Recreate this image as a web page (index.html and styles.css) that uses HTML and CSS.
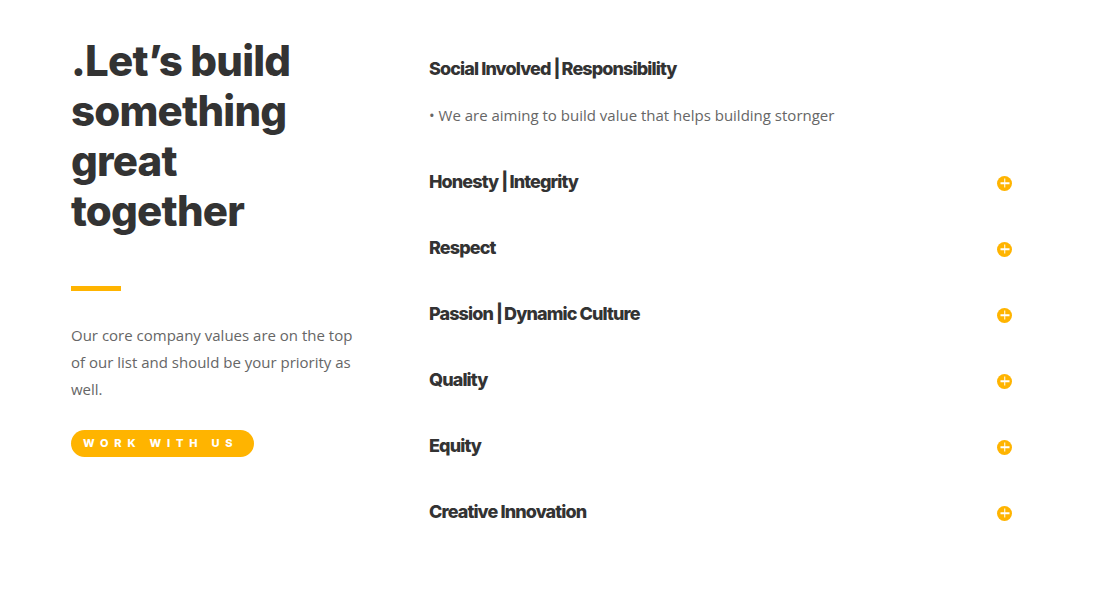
FILE: index.html
```html
<!DOCTYPE html>
<html lang="en">

<head>
	<meta charset="UTF-8">
	<meta name="viewport" content="width=device-width, initial-scale=1.0">
	<title>Our Values</title>
	<link rel="stylesheet" href="styles.css">
</head>

<body>
	<section class="values">
		<div class="intro">
			<h2 class="headline">.Let’s build something great together</h2>
			<span class="line"></span>
			<p class="lead">Our core company values are on the top of our list and should be your priority as well.</p>
			<a class="btn" href="#">Work with us</a>
		</div>

		<div class="accordion">
			<div class="tab on">
				<div class="title">Social Involved<span class="sep">|</span>Responsibility</div>
				<div class="desc">• We are aiming to build value that helps building stornger</div>
			</div>
			<div class="tab">
				<div class="title">Honesty<span class="sep">|</span>Integrity <span class="plus"></span></div>
			</div>
			<div class="tab">
				<div class="title">Respect <span class="plus"></span></div>
			</div>
			<div class="tab">
				<div class="title">Passion<span class="sep">|</span>Dynamic Culture <span class="plus"></span></div>
			</div>
			<div class="tab">
				<div class="title">Quality <span class="plus"></span></div>
			</div>
			<div class="tab">
				<div class="title">Equity <span class="plus"></span></div>
			</div>
			<div class="tab">
				<div class="title">Creative Innovation <span class="plus"></span></div>
			</div>
		</div>
	</section>
</body>

</html>
```

FILE: styles.css
```css
* {
	box-sizing: border-box;
}

body {
	margin: 0;
	background: #fff;
	font-family: "Open Sans", "Liberation Sans", sans-serif;
	color: #333;
}

.values {
	display: flex;
	padding: 36px 0 0 71px;
}

/* left column */
.intro {
	width: 300px;
	flex-shrink: 0;
}

.headline {
	margin: 0;
	font-family: Inter, "Noto Sans", sans-serif;
	font-weight: 800;
	font-size: 42px;
	line-height: 50px;
	letter-spacing: -0.8px;
	color: #333;
	width: 240px;
}

.line {
	display: block;
	width: 50px;
	height: 5px;
	margin-top: 50px;
	background: #ffb400;
}

.lead {
	margin: 31px 0 0;
	font-size: 15px;
	line-height: 27px;
	color: #666;
	width: 290px;
}

.btn {
	display: inline-block;
	margin-top: 27px;
	padding: 0 16px 0 12px;
	height: 27px;
	line-height: 27px;
	border-radius: 14px;
	background: #ffb400;
	color: #fff;
	font-family: Inter, sans-serif;
	font-weight: 800;
	font-size: 11px;
	letter-spacing: 5.8px;
	text-transform: uppercase;
	text-decoration: none;
}

/* right column */
.accordion {
	margin-left: 58px;
	width: 583px;
}

.tab {
	padding: 20px 0;
}

.title {
	display: flex;
	align-items: center;
	font-family: Inter, "Noto Sans", sans-serif;
	font-weight: 800;
	font-size: 18px;
	line-height: 26px;
	letter-spacing: -0.9px;
	color: #333;
	cursor: pointer;
}

.sep {
	margin: 0 2px 0 3px;
}

.desc {
	margin-top: 20px;
	font-size: 15px;
	line-height: 27px;
	color: #666;
}

.plus {
	position: relative;
	width: 15px;
	height: 15px;
	margin: 2px 0 0 auto;
	border-radius: 50%;
	background: #ffb400;
}

.plus::before,
.plus::after {
	content: "";
	position: absolute;
	background: #fff;
	left: 50%;
	top: 50%;
	transform: translate(-50%, -50%);
}

.plus::before {
	width: 9px;
	height: 1.5px;
}

.plus::after {
	width: 1.5px;
	height: 9px;
}
```
